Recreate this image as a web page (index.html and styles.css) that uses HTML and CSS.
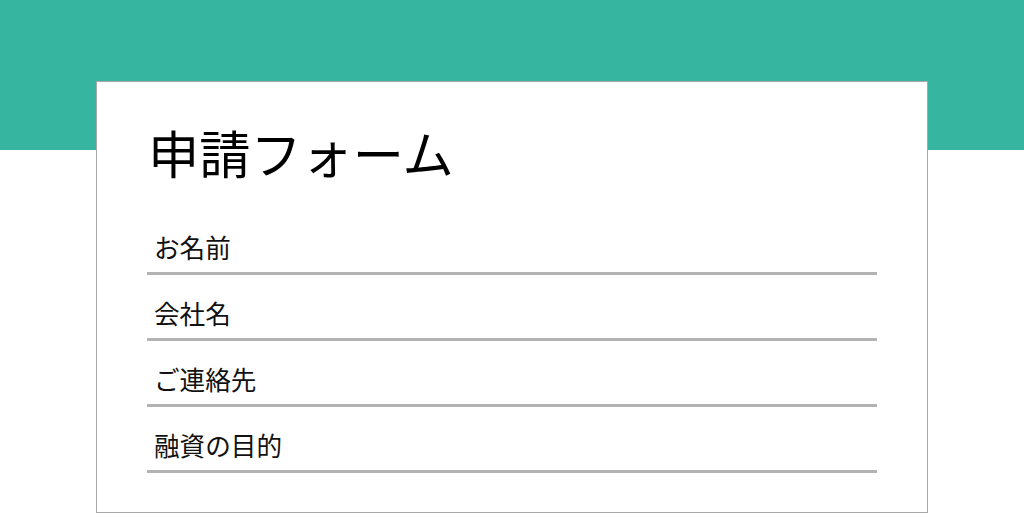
FILE: index.html
```html
<!DOCTYPE html>
<html lang="ja">
<head>
<meta charset="utf-8">
<title>申請フォーム</title>
<link rel="stylesheet" href="styles.css">
</head>
<body>
<main class="card">
  <h1 class="title">申請フォーム</h1>
  <div class="field">お名前</div>
  <div class="field">会社名</div>
  <div class="field">ご連絡先</div>
  <div class="field">融資の目的</div>
</main>
</body>
</html>
```
FILE: styles.css
```css
html, body {
  margin: 0;
  padding: 0;
}
body {
  background: linear-gradient(#36b6a0 0, #36b6a0 150px, #ffffff 150px);
  min-height: 514px;
  font-family: "Noto Sans CJK JP", "Noto Sans", sans-serif;
  color: #111;
  padding-top: 81px;
  box-sizing: border-box;
}
.card {
  box-sizing: border-box;
  width: 832px;
  margin: 0 auto;
  background: #fff;
  border: 1px solid #a8a8a8;
  padding: 40px 50px 39px;
}
.title {
  margin: 0 0 27px 1px;
  font-size: 51.2px;
  line-height: 60px;
  font-weight: 400;
  color: #000;
}
.field {
  padding: 25px 0 12px 7px;
  font-size: 25.6px;
  line-height: 26px;
  border-bottom: 3px solid #b3b3b3;
  color: #111;
}
```
